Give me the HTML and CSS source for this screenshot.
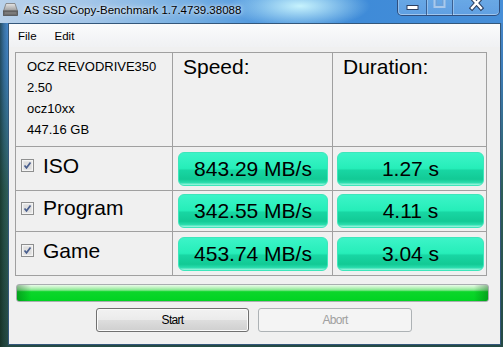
FILE: index.html
```html
<!DOCTYPE html>
<html>
<head>
<meta charset="utf-8">
<link rel="stylesheet" href="styles.css">
</head>
<body>
<div class="window">
  <div class="titlebar">
    <svg class="app-icon" width="15" height="13" viewBox="0 0 15 13">
      <defs>
        <linearGradient id="ai" x1="0" y1="0" x2="0" y2="1">
          <stop offset="0" stop-color="#e6e6e6"/>
          <stop offset="1" stop-color="#9a9a9a"/>
        </linearGradient>
      </defs>
      <path d="M3 0.5 H12 L14.5 8 H0.5 Z" fill="url(#ai)" stroke="#7a7a7a" stroke-width="0.8"/>
      <rect x="0.5" y="8" width="14" height="4.5" fill="#6d6d6d" stroke="#505050" stroke-width="0.8"/>
      <rect x="2" y="9.5" width="11" height="1" fill="#8a8a8a"/>
    </svg>
    <span class="title">AS SSD Copy-Benchmark 1.7.4739.38088</span>
    <div class="caption">
      <div class="cbtn cmin">
        <svg width="28" height="15" viewBox="0 0 28 15"><rect x="9" y="5.5" width="11" height="4" fill="#ffffff" stroke="#2c3f60" stroke-width="1"/></svg>
      </div>
      <div class="cbtn cmax">
        <svg width="25" height="15" viewBox="0 0 25 15"><rect x="7.5" y="-3" width="10" height="10" fill="none" stroke="#a9c8ea" stroke-width="2"/><rect x="9.5" y="-1" width="6" height="6" fill="none" stroke="#6f9fd4" stroke-width="1"/></svg>
      </div>
      <div class="cbtn cclose">
        <svg width="46" height="15" viewBox="0 0 46 15"><path d="M19 -2 L28 8 M28 -2 L19 8" stroke="#2c3f60" stroke-width="4.5" stroke-linecap="square"/><path d="M19 -2 L28 8 M28 -2 L19 8" stroke="#ffffff" stroke-width="2.4" stroke-linecap="square"/></svg>
      </div>
    </div>
  </div>
  <div class="client">
    <div class="menubar">
      <span class="menu-item">File</span>
      <span class="menu-item">Edit</span>
    </div>
    <div class="content">
      <div class="grid">
        <div class="cell info">
          <div>OCZ REVODRIVE350</div>
          <div>2.50</div>
          <div>ocz10xx</div>
          <div>447.16 GB</div>
        </div>
        <div class="cell head">Speed:</div>
        <div class="cell head">Duration:</div>

        <div class="cell label">
          <svg class="check" width="13" height="13" viewBox="0 0 13 13"><rect x="0.5" y="0.5" width="12" height="12" fill="#f4f4f4" stroke="#8e8f8f"/><rect x="2" y="2" width="9" height="9" fill="#dedede" stroke="#f6f6f6" stroke-width="0.6"/><path d="M3.5 6.5 L5.5 8.8 L9.5 3.5" fill="none" stroke="#4a5f8e" stroke-width="1.7"/></svg>
          <span>ISO</span>
        </div>
        <div class="cell val speed"><div class="pill">843.29 MB/s</div></div>
        <div class="cell val dur"><div class="pill">1.27 s</div></div>

        <div class="cell label">
          <svg class="check" width="13" height="13" viewBox="0 0 13 13"><rect x="0.5" y="0.5" width="12" height="12" fill="#f4f4f4" stroke="#8e8f8f"/><rect x="2" y="2" width="9" height="9" fill="#dedede" stroke="#f6f6f6" stroke-width="0.6"/><path d="M3.5 6.5 L5.5 8.8 L9.5 3.5" fill="none" stroke="#4a5f8e" stroke-width="1.7"/></svg>
          <span>Program</span>
        </div>
        <div class="cell val speed"><div class="pill">342.55 MB/s</div></div>
        <div class="cell val dur"><div class="pill">4.11 s</div></div>

        <div class="cell label">
          <svg class="check" width="13" height="13" viewBox="0 0 13 13"><rect x="0.5" y="0.5" width="12" height="12" fill="#f4f4f4" stroke="#8e8f8f"/><rect x="2" y="2" width="9" height="9" fill="#dedede" stroke="#f6f6f6" stroke-width="0.6"/><path d="M3.5 6.5 L5.5 8.8 L9.5 3.5" fill="none" stroke="#4a5f8e" stroke-width="1.7"/></svg>
          <span>Game</span>
        </div>
        <div class="cell val speed"><div class="pill">453.74 MB/s</div></div>
        <div class="cell val dur"><div class="pill">3.04 s</div></div>
      </div>
      <div class="progress"></div>
      <div class="actions">
        <button class="btn">Start</button>
        <button class="btn" disabled>Abort</button>
      </div>
    </div>
  </div>
</div>
</body>
</html>
```

FILE: styles.css
```css
html, body {
  margin: 0;
  padding: 0;
}
body {
  width: 503px;
  height: 347px;
  overflow: hidden;
  font-family: "Liberation Sans", Arial, sans-serif;
  color: #000;
}
.window {
  width: 503px;
  height: 347px;
  display: flex;
  flex-direction: column;
  background:
    linear-gradient(to right, rgba(10, 30, 15, 0.55) 0px, rgba(10, 30, 15, 0.2) 4px, rgba(10, 30, 15, 0) 8px),
    linear-gradient(to bottom, #4a8cd2 0%, #3d7db8 20%, #2e5e58 55%, #254a44 100%);
}
.titlebar {
  height: 23px;
  flex: none;
  display: flex;
  align-items: flex-start;
  background:
    radial-gradient(ellipse 70px 22px at 300px 6px, rgba(205, 248, 255, 0.95), rgba(205, 248, 255, 0)),
    linear-gradient(to right, #b8d1ea 0%, #a2c5e8 18%, #74aee2 38%, #4f97de 52%, #3f8bd8 72%, #468ed8 100%);
}
.app-icon {
  flex: none;
  margin: 3px 0 0 3px;
}
.title {
  margin: 3px 0 0 6px;
  font-size: 11.5px;
  line-height: 14px;
  white-space: nowrap;
  text-shadow: 0 0 6px rgba(255, 255, 255, 0.9), 0 0 3px rgba(255, 255, 255, 0.7);
}
.caption {
  margin-left: auto;
  margin-right: 3px;
  display: flex;
  height: 15px;
  border: 1px solid rgba(28, 50, 92, 0.75);
  border-top: none;
  border-radius: 0 0 5px 5px;
  overflow: hidden;
  box-shadow: inset 0 -1px 0 rgba(255, 255, 255, 0.4), inset 1px 0 0 rgba(255, 255, 255, 0.3);
  background: linear-gradient(to bottom, rgba(150, 200, 245, 0.45), rgba(120, 175, 235, 0.55));
}
.cbtn {
  height: 15px;
  display: flex;
}
.cbtn + .cbtn {
  border-left: 1px solid rgba(28, 50, 92, 0.6);
  box-shadow: inset 1px 0 0 rgba(255, 255, 255, 0.3);
}
.cmin { width: 28px; }
.cmax { width: 25px; }
.cclose { width: 46px; }
.client {
  margin-left: 8px;
  width: 493px;
  height: 322px;
  box-sizing: border-box;
  border: 1px solid #34577a;
  background: #f0f0f0;
  display: flex;
  flex-direction: column;
}
.menubar {
  height: 23px;
  flex: none;
  display: flex;
  align-items: center;
  background: linear-gradient(to bottom, #fafbfc, #f0f1f3);
  font-size: 11.5px;
}
.menu-item {
  padding: 0 9px;
}
.content {
  padding: 5px 0 0 6px;
}
.grid {
  display: grid;
  grid-template-columns: 156px 159px 153px;
  grid-template-rows: 93px 43px 40px 43px;
  gap: 1px;
  padding: 1px;
  width: 472px;
  box-sizing: border-box;
  background: #a0a0a0;
}
.cell {
  background: #f0f0f0;
  box-sizing: border-box;
}
.info {
  padding: 3px 0 0 11px;
  font-size: 13px;
  line-height: 21px;
}
.head {
  padding: 2px 0 0 10px;
  font-size: 21px;
  line-height: 24px;
}
.label {
  display: flex;
  align-items: center;
  padding: 0 0 6px 5px;
  font-size: 21px;
}
.check {
  flex: none;
  margin-right: 9px;
}
.val {
  display: flex;
  align-items: center;
}
.speed { padding: 0 4px 0 5px; }
.dur { padding: 0 2px 0 4px; }
.pill {
  flex: 1;
  height: 34px;
  box-sizing: border-box;
  border-radius: 6px;
  border: 1px solid #3ee6bb;
  display: flex;
  align-items: center;
  justify-content: center;
  font-size: 21px;
  background: linear-gradient(to bottom, #3cf4c8 0%, #26eeb9 48%, #18d6a3 54%, #12ca95 82%, #28dcac 92%, #a2f8e2 100%);
}
.progress {
  margin: 8px 0 0 1px;
  width: 473px;
  height: 18px;
  box-sizing: border-box;
  border: 1px solid #a9aeb0;
  border-radius: 3px;
  background:
    linear-gradient(to right, rgba(0, 70, 10, 0.35), rgba(0, 70, 10, 0) 3%, rgba(0, 70, 10, 0) 97%, rgba(0, 70, 10, 0.35)),
    linear-gradient(to bottom, #eafbea 0%, #b8f2ba 18%, #86e890 32%, #0cd62a 42%, #00d322 100%);
}
.actions {
  display: flex;
  gap: 9px;
  margin-top: 6px;
  padding-left: 81px;
}
.btn {
  width: 153px;
  height: 24px;
  margin: 0;
  padding: 0;
  box-sizing: border-box;
  border: 1px solid #707070;
  border-radius: 3px;
  font-family: "Liberation Sans", Arial, sans-serif;
  font-size: 12px;
  letter-spacing: -0.7px;
  color: #000;
  background: linear-gradient(to bottom, #f2f2f2 0%, #ebebeb 48%, #dddddd 52%, #cfcfcf 100%);
  box-shadow: inset 0 0 0 1px #fbfbfb;
}
.btn + .btn {
  width: 154px;
}
.btn:disabled {
  border-color: #adb2b5;
  background: #f4f4f4;
  color: #a0a0a0;
  box-shadow: none;
}
```
